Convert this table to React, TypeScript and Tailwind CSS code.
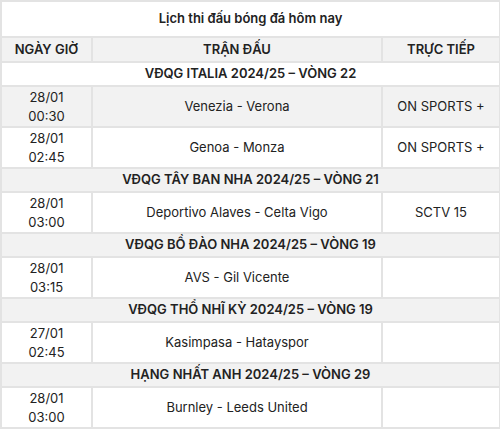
import React, { FC } from "react";

type Match = { date: string; time: string; teams: string; tv: string; shaded?: boolean };
type Group = { league: string; shaded: boolean; matches: Match[] };

const groups: Group[] = [
  {
    league: "VĐQG ITALIA 2024/25 – VÒNG 22",
    shaded: false,
    matches: [
      { date: "28/01", time: "00:30", teams: "Venezia - Verona", tv: "ON SPORTS +", shaded: true },
      { date: "28/01", time: "02:45", teams: "Genoa - Monza", tv: "ON SPORTS +" },
    ],
  },
  {
    league: "VĐQG TÂY BAN NHA 2024/25 – VÒNG 21",
    shaded: true,
    matches: [{ date: "28/01", time: "03:00", teams: "Deportivo Alaves - Celta Vigo", tv: "SCTV 15" }],
  },
  {
    league: "VĐQG BỒ ĐÀO NHA 2024/25 – VÒNG 19",
    shaded: true,
    matches: [{ date: "28/01", time: "03:15", teams: "AVS - Gil Vicente", tv: "" }],
  },
  {
    league: "VĐQG THỔ NHĨ KỲ 2024/25 – VÒNG 19",
    shaded: true,
    matches: [{ date: "27/01", time: "02:45", teams: "Kasimpasa - Hatayspor", tv: "" }],
  },
  {
    league: "HẠNG NHẤT ANH 2024/25 – VÒNG 29",
    shaded: true,
    matches: [{ date: "28/01", time: "03:00", teams: "Burnley - Leeds United", tv: "" }],
  },
];

const cell = "border-2 border-[#e3e3e3] text-center align-middle";

const App: FC = () => {
  return (
    <div className="h-[429px] w-[500px] bg-white font-['Inter',sans-serif] text-[13px] text-[#222]">
      <table className="w-[499px] table-fixed border-collapse">
        <colgroup>
          <col className="w-[91px]" />
          <col className="w-[290px]" />
          <col className="w-[118px]" />
        </colgroup>
        <tbody>
          <tr className="h-[36px] bg-white">
            <td colSpan={3} className={`${cell} font-semibold`}>
              Lịch thi đấu bóng đá hôm nay
            </td>
          </tr>
          <tr className="h-[25px] bg-[#f2f2f2] font-semibold">
            <td className={cell}>NGÀY GIỜ</td>
            <td className={cell}>TRẬN ĐẤU</td>
            <td className={cell}>TRỰC TIẾP</td>
          </tr>
          {groups.map((g) => (
            <React.Fragment key={g.league}>
              <tr className={`h-[24px] font-semibold ${g.shaded ? "bg-[#f2f2f2]" : "bg-white"}`}>
                <td colSpan={3} className={cell}>
                  {g.league}
                </td>
              </tr>
              {g.matches.map((m) => (
                <tr key={m.teams} className={`h-[41px] ${m.shaded ? "bg-[#f2f2f2]" : "bg-white"}`}>
                  <td className={`${cell} leading-[19px]`}>
                    {m.date}
                    <br />
                    {m.time}
                  </td>
                  <td className={cell}>{m.teams}</td>
                  <td className={cell}>{m.tv}</td>
                </tr>
              ))}
            </React.Fragment>
          ))}
        </tbody>
      </table>
    </div>
  );
};

export default App;
